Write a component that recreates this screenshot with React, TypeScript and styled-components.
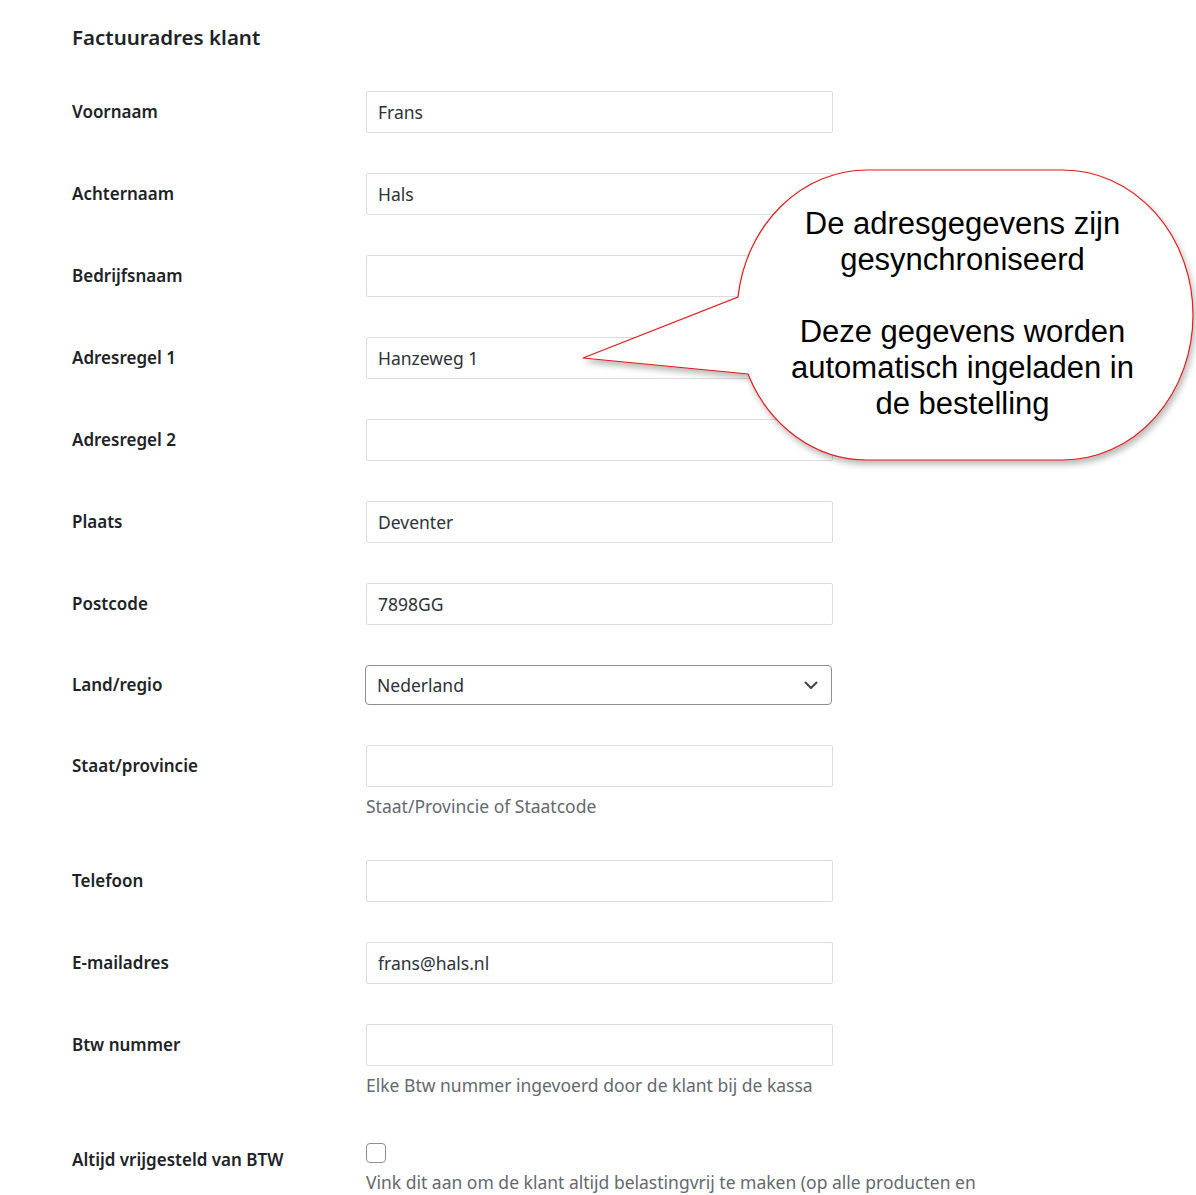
import React from "react";
import styled, { createGlobalStyle } from "styled-components";

const GlobalStyle = createGlobalStyle`
  html, body {
    margin: 0;
    padding: 0;
    background: #ffffff;
  }
  body {
    font-family: "Noto Sans", "Open Sans", sans-serif;
    color: #1d2327;
  }
`;

const Page = styled.div`
  position: relative;
  width: 1196px;
  height: 1195px;
  overflow: hidden;
  padding: 22px 0 0 72px;
  box-sizing: border-box;
`;

const Heading = styled.h2`
  margin: 0 0 39px;
  font-size: 20.5px;
  line-height: 30px;
  font-weight: 600;
  color: #1d2327;
`;

const Row = styled.div`
  display: grid;
  grid-template-columns: 294px 467px;
  padding-bottom: 40px;
`;

const Label = styled.label<{ $h?: number }>`
  font-size: 17px;
  font-weight: 600;
  line-height: ${(p) => p.$h ?? 42}px;
  color: #1d2327;
`;

const Field = styled.div`
  display: flex;
  flex-direction: column;
  align-items: flex-start;
`;

const Input = styled.input`
  width: 467px;
  height: 42px;
  box-sizing: border-box;
  border: 1px solid #dcdcde;
  border-radius: 2px;
  padding: 0 11px;
  font-family: inherit;
  font-size: 17.5px;
  color: #2c3338;
  background: #fff;
  outline: none;
`;

const SelectBox = styled.div`
  width: 467px;
  height: 40px;
  margin-left: -1px;
  box-sizing: border-box;
  border: 1px solid #8c8f94;
  border-radius: 4px;
  padding: 0 12px 0 11px;
  display: flex;
  align-items: center;
  justify-content: space-between;
  font-size: 17.5px;
  color: #2c3338;
`;

const Description = styled.p<{ $clip?: boolean }>`
  margin: 6px 0 0;
  font-size: 17.5px;
  line-height: 27px;
  color: #646970;
  white-space: nowrap;
  ${(p) => (p.$clip ? "width: 609px; overflow: hidden;" : "")}
`;

const Checkbox = styled.span`
  display: block;
  width: 20px;
  height: 20px;
  margin-top: 4px;
  box-sizing: border-box;
  border: 1px solid #8c8f94;
  border-radius: 4px;
  background: #fff;
`;

const Bubble = styled.div`
  position: absolute;
  left: 575px;
  top: 165px;
  width: 621px;
  height: 310px;
  pointer-events: none;
`;

const BubbleText = styled.div`
  position: absolute;
  left: 0;
  right: 0;
  top: 41px;
  padding-left: 154px;
  box-sizing: border-box;
  text-align: center;
  font-family: "Liberation Sans", Arial, sans-serif;
  font-size: 31px;
  line-height: 36px;
  color: #000;
  & p {
    margin: 0;
  }
`;

const Chevron = () => (
  <svg width="16" height="16" viewBox="0 0 16 16" fill="none">
    <path d="M2.5 5.5 L8 11 L13.5 5.5" stroke="#3c434a" strokeWidth="2" strokeLinecap="round" strokeLinejoin="round" />
  </svg>
);

const Callout = () => (
  <Bubble>
    <svg width="621" height="310" viewBox="575 165 621 310">
      <defs>
        <filter id="bshadow" x="-10%" y="-10%" width="130%" height="130%">
          <feDropShadow dx="2" dy="4" stdDeviation="3" floodColor="#000" floodOpacity="0.28" />
        </filter>
      </defs>
      <path
        d="M 738 297 A 130 145 0 0 1 867 170 L 1063 170 A 130 145 0 0 1 1193 315 A 130 145 0 0 1 1063 460 L 867 460 A 130 145 0 0 1 748 374 L 583 358 Z"
        fill="#fff"
        stroke="#e31b1b"
        strokeWidth="1.2"
        filter="url(#bshadow)"
      />
    </svg>
    <BubbleText>
      <p>De adresgegevens zijn</p>
      <p>gesynchroniseerd</p>
      <p>&nbsp;</p>
      <p>Deze gegevens worden</p>
      <p>automatisch ingeladen in</p>
      <p>de bestelling</p>
    </BubbleText>
  </Bubble>
);

type FieldDef = { label: string; value?: string; desc?: string };

const fields: FieldDef[] = [
  { label: "Voornaam", value: "Frans" },
  { label: "Achternaam", value: "Hals" },
  { label: "Bedrijfsnaam" },
  { label: "Adresregel 1", value: "Hanzeweg 1" },
  { label: "Adresregel 2" },
  { label: "Plaats", value: "Deventer" },
  { label: "Postcode", value: "7898GG" },
];

const fieldsAfter: FieldDef[] = [
  { label: "Staat/provincie", desc: "Staat/Provincie of Staatcode" },
  { label: "Telefoon" },
  { label: "E-mailadres", value: "frans@hals.nl" },
  { label: "Btw nummer", desc: "Elke Btw nummer ingevoerd door de klant bij de kassa" },
];

const TextRow: React.FC<FieldDef> = ({ label, value, desc }) => (
  <Row>
    <Label>{label}</Label>
    <Field>
      <Input defaultValue={value ?? ""} readOnly />
      {desc && <Description>{desc}</Description>}
    </Field>
  </Row>
);

export default function App() {
  return (
    <>
      <GlobalStyle />
      <Page>
        <Heading>Factuuradres klant</Heading>
        {fields.map((f) => (
          <TextRow key={f.label} {...f} />
        ))}
        <Row>
          <Label $h={40}>Land/regio</Label>
          <Field>
            <SelectBox>
              <span>Nederland</span>
              <Chevron />
            </SelectBox>
          </Field>
        </Row>
        {fieldsAfter.map((f) => (
          <TextRow key={f.label} {...f} />
        ))}
        <Row>
          <Label>Altijd vrijgesteld van BTW</Label>
          <Field>
            <Checkbox />
            <Description $clip>
              Vink dit aan om de klant altijd belastingvrij te maken (op alle producten en verzendkosten)
            </Description>
          </Field>
        </Row>
        <Callout />
      </Page>
    </>
  );
}
